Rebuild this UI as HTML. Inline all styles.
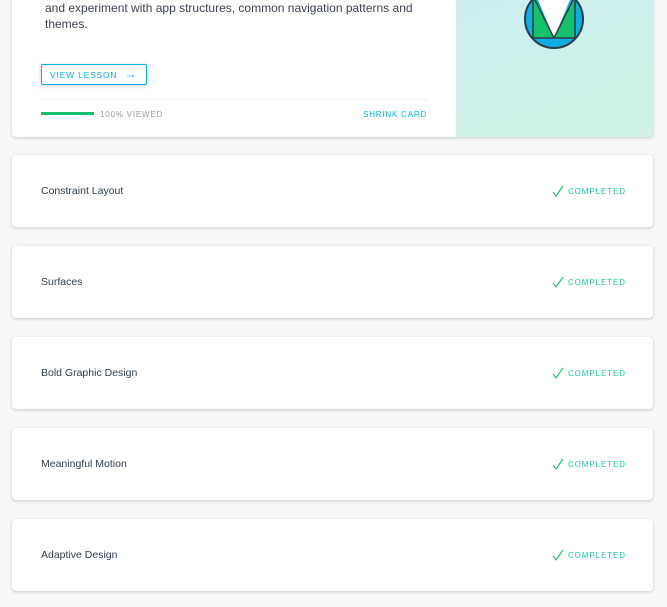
<!DOCTYPE html>
<html><head><style>
body{margin:0;background:#f7f8fa;font-family:"Liberation Sans",sans-serif;width:667px;height:607px;overflow:hidden;position:relative}
.top{position:absolute;left:12px;top:-20px;width:641px;height:157px;background:#fff;border-radius:0 0 4px 4px;box-shadow:0 1px 3px rgba(0,0,0,.2);overflow:hidden}
.img{position:absolute;left:444px;top:0;width:197px;height:157px;background:linear-gradient(160deg,#cdeef2,#d0f2e3)}
.desc{position:absolute;left:33px;top:20px;font-size:12px;line-height:16px;color:#3c4451}
.btn{position:absolute;left:29px;top:84px;width:96px;height:19px;border:1px solid #02b3e4;border-radius:2px;box-shadow:0 1px 4px rgba(0,0,0,.2);color:#02b3e4;font-size:8.5px;letter-spacing:.8px;line-height:19px;padding-left:8px;box-sizing:content-box}
.hr{position:absolute;left:29px;top:119px;width:387px;border-top:1px solid #eef0f3}
.bar{position:absolute;left:29px;top:132px;width:53px;height:3px;background:#15c26b}
.vw{position:absolute;left:88px;top:130px;font-size:8px;letter-spacing:.8px;color:#959ca6}
.sh{position:absolute;right:226px;top:130px;font-size:8px;letter-spacing:.8px;color:#02b3e4}
.card{position:absolute;left:12px;width:641px;height:72px;background:#fff;border-radius:4px;box-shadow:0 1px 3px rgba(0,0,0,.2)}
.card .t{position:absolute;left:29px;top:30px;font-size:10.5px;color:#2e3d49}
.card .c{position:absolute;left:540px;top:30px;font-size:8px;letter-spacing:.9px;color:#1fc8a5}
.card svg{vertical-align:-3px;margin-right:4px}
</style></head><body>
<div class="top">
<div class="desc">and experiment with app structures, common navigation patterns and<br>themes.</div>
<div class="btn">VIEW LESSON <span style="font-size:12px;margin-left:4px">→</span></div>
<div class="hr"></div><div class="bar"></div>
<div class="vw">100% VIEWED</div><div class="sh">SHRINK CARD</div>
<div class="img"><svg style="position:absolute;left:67px;top:8px" width="62" height="62" viewBox="0 0 62 62"><circle cx="31" cy="31" r="29" fill="#0eaee0" stroke="#2e3d49" stroke-width="2"/><path d="M10 0 H52 L31 50 Z" fill="#fff"/><path d="M10 8 V50 H52 V8 L31 50 Z" fill="#15c26b" stroke="#2e3d49" stroke-width="1.5"/></svg></div>
</div>
<div class="card" style="top:155px"><div class="t">Constraint Layout</div><div class="c"><svg width="12" height="12" viewBox="0 0 12 12"><path d="M1 7l3 4 7-10" fill="none" stroke="#15c26b" stroke-width="1.1"/></svg>COMPLETED</div></div>
<div class="card" style="top:246px"><div class="t">Surfaces</div><div class="c"><svg width="12" height="12" viewBox="0 0 12 12"><path d="M1 7l3 4 7-10" fill="none" stroke="#15c26b" stroke-width="1.1"/></svg>COMPLETED</div></div>
<div class="card" style="top:337px"><div class="t">Bold Graphic Design</div><div class="c"><svg width="12" height="12" viewBox="0 0 12 12"><path d="M1 7l3 4 7-10" fill="none" stroke="#15c26b" stroke-width="1.1"/></svg>COMPLETED</div></div>
<div class="card" style="top:428px"><div class="t">Meaningful Motion</div><div class="c"><svg width="12" height="12" viewBox="0 0 12 12"><path d="M1 7l3 4 7-10" fill="none" stroke="#15c26b" stroke-width="1.1"/></svg>COMPLETED</div></div>
<div class="card" style="top:519px"><div class="t">Adaptive Design</div><div class="c"><svg width="12" height="12" viewBox="0 0 12 12"><path d="M1 7l3 4 7-10" fill="none" stroke="#15c26b" stroke-width="1.1"/></svg>COMPLETED</div></div>
</body></html>
